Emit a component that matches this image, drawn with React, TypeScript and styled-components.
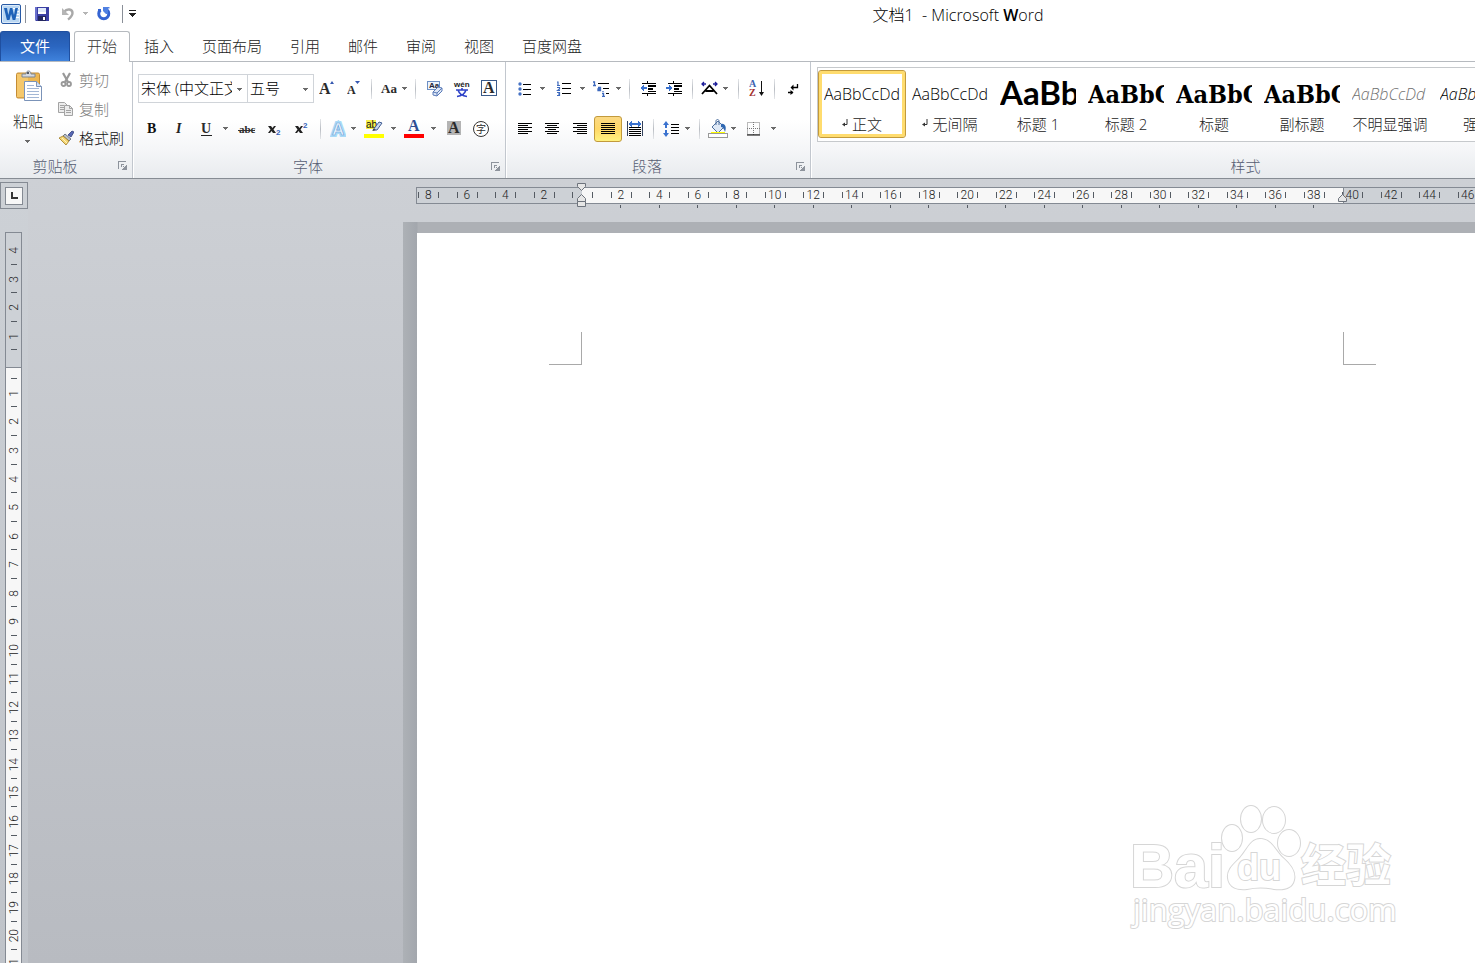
import React from 'react';
import styled, { createGlobalStyle, css } from 'styled-components';

const sans = '"Open Sans", "Noto Sans CJK SC", sans-serif';
const serif = '"Liberation Serif", serif';

const GlobalStyle = createGlobalStyle`
  * { box-sizing: border-box; }
  body { margin: 0; font-family: ${sans}; font-size: 15px; font-weight: 300; color: #222; background: #fff; }
  button, select { font: inherit; color: inherit; margin: 0; padding: 0; border: 0; background: none; }
  svg { display: block; flex: none; }
`;

const Window = styled.div`
  display: flex;
  flex-direction: column;
  height: 100vh;
  overflow: hidden;
`;

/* ---------- title bar ---------- */
const TitleBar = styled.header`
  display: flex;
  flex: none;
  height: 31px;
`;
const QuickAccess = styled.div`
  display: flex;
  align-items: center;
  height: 27px;
  padding-left: 1px;
`;
const QuickButton = styled.button<{ $w: number }>`
  display: flex;
  align-items: center;
  justify-content: center;
  width: ${(p) => p.$w}px;
  height: 24px;
`;
const QuickRule = styled.span`
  width: 1px;
  height: 18px;
  margin: 0 4px;
  background: #8a8f98;
`;
const Title = styled.h1`
  flex: 1;
  margin: 0;
  padding-left: 304px;
  text-align: center;
  font-size: 16px;
  line-height: 31px;
  font-weight: 300;
  color: #000;
`;
const TitleStrong = styled.span`
  font-weight: 600;
`;

/* ---------- tabs ---------- */
const TabBar = styled.nav`
  display: flex;
  flex: none;
  height: 31px;
  border-bottom: 1px solid #b6babf;
`;
const FileTab = styled.button`
  width: 70px;
  margin-right: 4px;
  padding-bottom: 2px;
  color: #fff;
  border: 1px solid #1f4fa0;
  border-bottom: 0;
  border-radius: 3px 3px 0 0;
  background: linear-gradient(#2459ad, #2b66c0 50%, #3f82dc);
  font-weight: 400;
`;
const Tab = styled.button<{ $active?: boolean }>`
  padding: 0 14px 2px;
  height: 31px;
  color: #222;
  ${(p) =>
    p.$active &&
    css`
      padding: 0 12px 4px;
      border: 1px solid #b6babf;
      border-bottom: 0;
      border-radius: 3px 3px 0 0;
      background: #fff;
      color: #333;
    `}
`;

/* ---------- ribbon ---------- */
const Ribbon = styled.div`
  display: flex;
  flex: none;
  height: 117px;
  border-bottom: 1px solid #868c93;
  background: linear-gradient(#fff 0, #fff 50%, #f5f6f8 75%, #e8ebee 100%);
`;
const Group = styled.section<{ $w: number }>`
  display: flex;
  flex-direction: column;
  flex: none;
  width: ${(p) => p.$w}px;
  border-right: 1px solid #c2c7ce;
  box-shadow: 1px 0 0 #fff;
`;
const GroupBody = styled.div`
  display: flex;
  flex-direction: column;
  flex: 1;
  padding: 13px 5px 0;
`;
const GroupFoot = styled.footer`
  display: flex;
  align-items: center;
  height: 24px;
  padding: 0 4px 0 0;
  color: #565d72;
`;
const GroupName = styled.span`
  flex: 1;
  padding: 0 8px 2px 0;
  text-align: center;
`;
const ToolRow = styled.div`
  display: flex;
  align-items: center;
  height: 27px;
  margin-bottom: 13px;
`;
const Tool = styled.button<{ $w?: number; $on?: boolean }>`
  display: flex;
  align-items: center;
  justify-content: center;
  flex: none;
  width: ${(p) => p.$w ?? 27}px;
  height: 26px;
  ${(p) =>
    p.$on &&
    css`
      border: 1px solid #c29a3c;
      border-radius: 3px;
      background: linear-gradient(#fbd984, #ffd868 50%, #fff27f);
    `}
`;
const Divider = styled.span<{ $w: number }>`
  flex: none;
  width: ${(p) => p.$w}px;
  height: 20px;
  background: linear-gradient(#e4e6e9, #b9bdc3, #e4e6e9) center / 1px 100% no-repeat;
`;
const Combo = styled.div<{ $w: number }>`
  position: relative;
  flex: none;
  width: ${(p) => p.$w}px;
  height: 29px;
  margin-right: -1px;
  border: 1px solid #d0d4d9;
  background: #fff;
`;
const ComboSelect = styled.select`
  appearance: none;
  width: 100%;
  height: 26px;
  padding: 0 15px 0 2px;
  color: #000;
`;
const ComboArrow = styled.span`
  position: absolute;
  top: 13px;
  right: 4px;
  pointer-events: none;
`;

const ClipBody = styled.div`
  display: flex;
  flex: 1;
  padding: 3px 0 0 6px;
`;
const PasteButton = styled.button`
  display: flex;
  flex-direction: column;
  align-items: center;
  width: 44px;
  height: 86px;
  padding-top: 5px;
  line-height: 20px;
  gap: 9px;
`;
const ClipList = styled.div`
  display: flex;
  flex-direction: column;
  padding-left: 8px;
`;
const ClipButton = styled.button<{ $off?: boolean }>`
  display: flex;
  align-items: center;
  gap: 5px;
  height: 29px;
  white-space: nowrap;
  color: ${(p) => (p.$off ? '#808080' : '#111')};
`;

const Gallery = styled.div`
  display: flex;
  flex: none;
  height: 75px;
  margin: 5px 0 0 6px;
  padding: 2px 0 0;
  border: 1px solid #c6c9cc;
  border-right: 0;
  background: #fff;
`;
const StyleCard = styled.button<{ $on?: boolean }>`
  display: flex;
  flex-direction: column;
  flex: none;
  width: 88px;
  height: 68px;
  padding: 2px;
  border: 1px solid ${(p) => (p.$on ? '#c29a3c' : 'transparent')};
  border-radius: 3px;
  box-shadow: ${(p) => (p.$on ? 'inset 0 0 0 3px #ffdc6e' : 'none')};
`;
type SampleKind = 'body' | 'h1' | 'serif' | 'subtle' | 'italic';
const Sample = styled.span<{ $kind: SampleKind }>`
  display: block;
  width: 76px;
  height: 40px;
  margin-left: 3px;
  overflow: hidden;
  white-space: nowrap;
  text-align: left;
  color: #000;
  font-size: 16px;
  line-height: 42px;
  font-weight: 300;
  ${(p) => p.$kind === 'h1' && css`font: 700 33px/38px Lato, sans-serif;`}
  ${(p) => p.$kind === 'serif' && css`font: 700 25px/44px "DejaVu Serif Condensed", "DejaVu Serif", serif;`}
  ${(p) => p.$kind === 'subtle' && css`font-style: italic; color: #707070;`}
  ${(p) => p.$kind === 'italic' && css`font-style: italic;`}
`;
const StyleName = styled.span`
  display: flex;
  align-items: center;
  justify-content: center;
  gap: 4px;
  height: 20px;
  white-space: nowrap;
  color: #222;
`;

/* ---------- workspace ---------- */
const Workspace = styled.main`
  display: flex;
  flex: 1;
  min-height: 0;
  background: linear-gradient(#cdd0d5, #b8bbc1);
`;
const Gutter = styled.aside`
  display: flex;
  flex-direction: column;
  flex: none;
  width: 28px;
  padding-top: 3px;
  background: linear-gradient(#cdd1d6, #bfc3c9);
`;
const TabStop = styled.button`
  display: flex;
  align-items: center;
  justify-content: center;
  flex: none;
  width: 28px;
  height: 27px;
  border: 1px solid #848a93;
`;
const TabStopFace = styled.span`
  display: flex;
  align-items: center;
  justify-content: center;
  width: 18px;
  height: 18px;
  border: 1px solid #848a93;
  background: #f7f7f7;
`;
const VRuler = styled.div`
  flex: 1;
  min-height: 0;
  width: 17px;
  margin: 23px 0 0 5px;
  padding-top: 3px;
  overflow: hidden;
  border: 1px solid #848a93;
  border-bottom: 0;
  background: linear-gradient(#cdd1d6 134px, #848a93 134px, #848a93 135px, #f7f7f7 135px);
`;
const VBlock = styled.div`
  display: grid;
  grid-template-rows: repeat(7, 1fr);
  height: 200px;
`;
const VCell = styled.div`
  display: flex;
  align-items: center;
  justify-content: center;
  min-height: 0;
  background: linear-gradient(#555b63, #555b63) center bottom / 6px 1px no-repeat;
`;
const VNumber = styled.span`
  writing-mode: vertical-rl;
  transform: rotate(180deg);
  font-family: Roboto, sans-serif;
  font-size: 12px;
  line-height: 14px;
  color: #222;
`;

const Canvas = styled.div`
  display: flex;
  flex-direction: column;
  flex: 1;
  min-width: 0;
`;
const RulerArea = styled.div`
  position: relative;
  flex: none;
  height: 43px;
  padding: 8px 0 0 388px;
`;
const HRuler = styled.div`
  height: 17px;
  overflow: hidden;
  border: 1px solid #848a93;
  border-right: 0;
  background: linear-gradient(90deg, #cdd1d6 165px, #f7f7f7 165px, #f7f7f7 926px, #848a93 926px, #848a93 927px, #cdd1d6 927px);
`;
const HStrip = styled.div<{ $shift: number }>`
  display: flex;
  margin-left: ${(p) => p.$shift}px;
`;
const HPair = styled.div`
  display: grid;
  grid-template-columns: 1fr 1fr;
  flex: none;
  width: 77px;
`;
const HCell = styled.div`
  display: flex;
  align-items: center;
  justify-content: center;
  height: 15px;
  background:
    linear-gradient(#555b63, #555b63) 9px 4px / 1px 6px no-repeat,
    linear-gradient(#555b63, #555b63) 29px 4px / 1px 6px no-repeat;
  font-family: Roboto, sans-serif;
  font-size: 12px;
  line-height: 15px;
  color: #222;
`;
const StopCell = styled.div<{ $show: boolean }>`
  height: 4px;
  background: ${(p) => (p.$show ? 'linear-gradient(#555b63, #555b63) center bottom / 1px 3px no-repeat' : 'none')};
`;
const IndentMark = styled.span<{ $x: number; $y: number }>`
  position: absolute;
  left: ${(p) => p.$x}px;
  top: ${(p) => p.$y}px;
`;
const PageArea = styled.div`
  position: relative;
  display: flex;
  flex: 1;
  min-height: 0;
  margin-left: 375px;
  padding: 11px 0 0 14px;
  background: linear-gradient(90deg, #adb1b6, #a3a7ad 14px, #adb0b5 15px);
`;
const Page = styled.article`
  display: flex;
  flex: 1;
  padding: 99px 0 0 132px;
  background: #fff;
`;
const CropMark = styled.span<{ $side: 'left' | 'right' }>`
  flex: none;
  width: 33px;
  height: 33px;
  border: 0 solid #a9a9a9;
  border-bottom-width: 1px;
  ${(p) => (p.$side === 'left' ? 'border-right-width: 1px; margin-right: 761px;' : 'border-left-width: 1px;')}
`;
const Watermark = styled.div`
  position: absolute;
  right: 73px;
  bottom: 27px;
`;

/* ---------- icons ---------- */
const Arrow = ({ color = '#6a6a6a' }: { color?: string }) => (
  <svg width="6" height="4" viewBox="0 0 6 4"><path d="M0 0h5v1h-1v1h-1v1h-1v-1h-1v-1h-1z" fill={color} shapeRendering="crispEdges" /></svg>
);
const Drop = () => <Tool $w={8} aria-label="更多"><Arrow /></Tool>;

const WordLogo = () => (
  <svg width="20" height="20" viewBox="0 0 20 20">
    <rect x="0.500" y="0.500" width="19" height="19" rx="1.500" fill="#dcebfa" stroke="#285aa5" />
    <rect x="2" y="2" width="16" height="16" fill="#b9d6f2" />
    <path d="M12 4h6v1h-6zM14 7h4v1h-4zM15 10h3v1h-3zM14 13h4v1h-4z" fill="#fff" />
    <path d="M3 4h3l1.300 7 1.700-7h2.300l1.700 7 1.300-7h2.700l-2.700 12h-2.600l-1.600-6-1.600 6h-2.600z" fill="#1f62b8" />
  </svg>
);
const Save = () => (
  <svg width="14" height="14" viewBox="0 0 14 14">
    <path d="M0 0h14v14h-13l-1-1z" fill="#3b3fa4" /><path d="M0 0h2v13h-2z" fill="#6a70cc" />
    <path d="M3 1h8v6h-8z" fill="#dfe9fa" /><path d="M3 5h8v2h-8z" fill="#fff" />
    <path d="M3 9h8v5h-8z" fill="#23265f" /><path d="M8 10h2v3h-2z" fill="#fff" />
  </svg>
);
const Undo = () => (
  <svg width="14" height="14" viewBox="0 0 14 14" fill="none">
    <path d="M3 5c3-4 8.500-3 8.500 1 0 3-2 4.500-4.500 6.500" stroke="#a9a9a9" strokeWidth="2.400" />
    <path d="M1 1v7h7z" fill="#b5b5b5" />
  </svg>
);
const Redo = () => (
  <svg width="14" height="14" viewBox="0 0 14 14" fill="none">
    <path d="M3.500 3a5 5 0 1 0 6.500 0" stroke="#3564d2" strokeWidth="3" />
    <path d="M6 0h6.500v1.500h-1.500v5.500h-2l-3-3z" fill="#4f80e2" /><path d="M1 2h3v3h-3z" fill="#3564d2" />
  </svg>
);
const Customize = () => (
  <svg width="7" height="7" viewBox="0 0 7 7" shapeRendering="crispEdges"><path d="M0 0h7v1h-7zM0 3h7v1h-1v1h-1v1h-1v1h-1v-1h-1v-1h-1v-1h-1z" fill="#222" /></svg>
);
const Paste = () => (
  <svg width="28" height="32" viewBox="0 0 28 32">
    <rect x="2.500" y="3" width="23" height="25" rx="1.500" fill="#edb752" stroke="#c48c34" />
    <path d="M3 4h11v23h-11z" fill="#f5c86c" />
    <path d="M8 7v-3h4c0-4 5-4 5 0h4v3z" fill="#d6dae0" stroke="#7e8792" /><rect x="13" y="2" width="2" height="2" fill="#545b66" />
    <path d="M10.500 11.500h12l5 5v14h-17z" fill="#fff" stroke="#7b93b8" />
    <path d="M22.500 11.500v5h5" fill="#d4e1f3" stroke="#7b93b8" />
    <path d="M13 15.500h7M13 18.500h12M13 21.500h12M13 24.500h12M13 27.500h12" stroke="#a3b7d5" />
  </svg>
);
const Cut = () => (
  <svg width="16" height="16" viewBox="0 0 16 16" fill="none" stroke="#999">
    <path d="M5 1l5 9M12 1l-5 9" strokeWidth="2.200" /><circle cx="5.500" cy="12" r="2" strokeWidth="1.800" /><circle cx="11" cy="12" r="2" strokeWidth="1.800" />
  </svg>
);
const Copy = () => (
  <svg width="16" height="16" viewBox="0 0 16 16" fill="#ececec" stroke="#a3a3a3">
    <path d="M0.500 1.500h6l3 3v7h-9z" /><path d="M2 4.500h4M2 6.500h4M2 8.500h4" />
    <path d="M6.500 4.500h5l3 3v7h-8z" /><path d="M11.500 4.500v3h3M8 9.500h5M8 11.500h5" fill="none" />
  </svg>
);
const Brush = () => (
  <svg width="16" height="16" viewBox="0 0 16 16">
    <path d="M10 5l4-4 2 1-3 5z" fill="#5868b4" stroke="#34417c" strokeWidth="0.800" />
    <path d="M7 4l6 5-2 2-6-5z" fill="#b7bdc7" stroke="#596270" strokeWidth="0.800" />
    <path d="M5 6l6 5-3 4-7-7z" fill="#f4d675" stroke="#a07b25" strokeWidth="0.800" />
    <path d="M4 8l5 5" stroke="#fff3bd" />
  </svg>
);
const Launcher = () => (
  <svg width="10" height="10" viewBox="0 0 10 10" shapeRendering="crispEdges">
    <path d="M0 0h8v1h-7v7h-1z" fill="#8d939c" /><path d="M3 3h3v1h-3zM3 3h1v3h-1zM5 5h1v1h-1zM6 6h1v1h-1zM8 4h1v5h-5v-1h1v-1h2v-2h1z" fill="#8d939c" />
  </svg>
);
type LetterProps = { x?: number; y?: number; size: number; fill?: string; children: React.ReactNode; family?: string; weight?: number; style?: 'italic' };
const Letter = ({ x = 0, y = 0, size, fill = '#2b2b2b', children, family = serif, weight = 700, style }: LetterProps) => (
  <text x={x} y={y} fontSize={size} fill={fill} fontFamily={family} fontWeight={weight} fontStyle={style}>{children}</text>
);
const Grow = () => (
  <svg width="15" height="18" viewBox="0 0 15 18"><Letter y={14} size={16}>A</Letter><path d="M11 4h4l-2-3z" fill="#3558b0" /></svg>
);
const Shrink = () => (
  <svg width="13" height="18" viewBox="0 0 13 18"><Letter y={14} size={12}>A</Letter><path d="M8 1h5l-2.500 3z" fill="#3558b0" /></svg>
);
const CaseIcon = () => (
  <svg width="17" height="18" viewBox="0 0 17 18"><Letter x={1} y={13} size={13}>Aa</Letter></svg>
);
const ClearFormat = () => (
  <svg width="18" height="18" viewBox="0 0 18 18">
    <rect x="1.500" y="1.500" width="12" height="8" fill="#eef4fb" stroke="#6d8fc4" />
    <Letter x={3} y={8} size={8} family="Liberation Sans" fill="#223">Aa</Letter>
    <path d="M7 12l5-5 4 1v3l-5 5-4-1z" fill="#dfe8f6" stroke="#5a7bb8" /><path d="M7 12l4 1v3M11 13l5-5" fill="none" stroke="#5a7bb8" />
  </svg>
);
const Phonetic = () => (
  <svg width="18" height="18" viewBox="0 0 18 18">
    <Letter x={1} y={7} size={8} family="Liberation Sans" fill="#222">wén</Letter>
    <path d="M3 10h12M9 8v2M5 10c1 3 4 6 9 6.500M13 10c-1 3-4 6-9 6.500" fill="none" stroke="#2f43c8" strokeWidth="1.600" />
  </svg>
);
const CharBorder = () => (
  <svg width="16" height="17" viewBox="0 0 16 17"><rect x="0.500" y="0.500" width="15" height="15" fill="#fff" stroke="#3a5a8a" /><Letter x={2} y={13} size={16}>A</Letter></svg>
);
const TextEffect = () => (
  <svg width="16" height="18" viewBox="0 0 16 18">
    <text x="2" y="15" fontSize="17" fontFamily="Liberation Sans" fontWeight="700" fill="#fff" stroke="#a9daf7" strokeWidth="4" paintOrder="stroke">A</text>
    <text x="2" y="15" fontSize="17" fontFamily="Liberation Sans" fontWeight="700" fill="#eaf4fc" stroke="#6a9fd8" strokeWidth="0.700">A</text>
  </svg>
);
const Highlight = () => (
  <svg width="20" height="20" viewBox="0 0 20 20">
    <rect x="2" y="1" width="10" height="9" fill="#f7f04a" /><Letter x={2} y={9} size={10} family="Liberation Sans" weight={400} fill="#111">ab</Letter>
    <path d="M9 11l6-8 3 1-5 7z" fill="#c8d6ee" stroke="#3f5c93" /><path d="M8 12l2-2 2 1z" fill="#333" />
    <rect y="15" width="20" height="4" fill="#ff0" />
  </svg>
);
const FontColor = () => (
  <svg width="20" height="20" viewBox="0 0 20 20"><Letter x={4} y={12} size={16} fill="#2f4f93">A</Letter><rect y="15" width="20" height="4" fill="#f00" /></svg>
);
const Shade = () => (
  <svg width="14" height="15" viewBox="0 0 14 15"><rect width="14" height="14" fill="#b4b4b4" /><Letter x={1} y={12} size={16}>A</Letter></svg>
);
const Enclose = () => (
  <svg width="18" height="18" viewBox="0 0 18 18"><circle cx="9" cy="9" r="7.500" fill="#fff" stroke="#333" /><Letter x={4} y={13} size={10} family="Noto Sans CJK SC" weight={400}>字</Letter></svg>
);
const BoldIcon = () => <svg width="12" height="14" viewBox="0 0 12 14"><Letter x={1} y={11} size={14} fill="#111">B</Letter></svg>;
const ItalicIcon = () => <svg width="12" height="14" viewBox="0 0 12 14"><Letter x={3} y={11} size={14} style="italic" fill="#222">I</Letter></svg>;
const UnderlineIcon = () => (
  <svg width="12" height="14" viewBox="0 0 12 14"><Letter x={1} y={11} size={14}>U</Letter><path d="M1 13.500h11" stroke="#222" /></svg>
);
const StrikeIcon = () => (
  <svg width="18" height="14" viewBox="0 0 18 14"><Letter x={1} y={11} size={11}>abc</Letter><path d="M0 8.500h17" stroke="#333" /></svg>
);
const Script = ({ up }: { up?: boolean }) => (
  <svg width="14" height="16" viewBox="0 0 14 16"><path d="M1 5h3l1.500 2 1.500-2h2l-2.500 3.500 2.500 3.500h-3l-1.500-2-1.500 2h-2l2.500-3.500z" fill="#222" /><Letter x={9} y={up ? 7 : 14} size={8} family="Liberation Sans" fill="#3561b8">2</Letter></svg>
);
const Lines = ({ rows }: { rows: [number, number][] }) => (
  <svg width="14" height="12" viewBox="0 0 14 12" shapeRendering="crispEdges">
    {rows.map(([x, w], i) => <rect key={i} x={x} y={i * 2} width={w} height="1" fill="#000" />)}
  </svg>
);
const alignLeft: [number, number][] = [[0, 14], [0, 10], [0, 14], [0, 10], [0, 14], [0, 10]];
const alignCenter: [number, number][] = [[0, 14], [2, 10], [0, 14], [3, 8], [0, 14], [2, 10]];
const alignRight: [number, number][] = [[0, 14], [4, 10], [0, 14], [4, 10], [0, 14], [4, 10]];
const alignFull: [number, number][] = [[0, 14], [0, 14], [0, 14], [0, 14], [0, 14], [0, 14]];
const Distribute = () => (
  <svg width="16" height="16" viewBox="0 0 16 16" shapeRendering="crispEdges">
    <path d="M0 0h1v15h-1zM15 0h1v15h-1z" fill="#33415c" /><path d="M1 3l4-3v2h6v-2l4 3-4 3v-2h-6v2z" fill="#3a72cf" />
    <path d="M2 6h12v1h-12zM2 8h12v1h-12zM2 10h12v1h-12zM2 12h12v1h-12zM2 14h12v1h-12z" fill="#000" />
  </svg>
);
const Bullets = () => (
  <svg width="14" height="14" viewBox="0 0 14 14"><g fill="#4672c4"><circle cx="2" cy="2" r="1.700" /><circle cx="2" cy="7" r="1.700" /><circle cx="2" cy="12" r="1.700" /></g><path d="M5 2.500h8M5 7.500h8M5 12.500h8" stroke="#000" /></svg>
);
const Numbering = () => (
  <svg width="15" height="15" viewBox="0 0 15 15">
    <path d="M1 1h1v3M1 4.500h3M1 6.500h2.500v1.500l-2 1.500h2.500M1 11.500h2.500v3h-2.500M2 13h1" fill="none" stroke="#3d69bd" strokeWidth="1.200" />
    <path d="M6 2.500h9M6 7.500h9M6 12.500h9" stroke="#000" />
  </svg>
);
const Multilevel = () => (
  <svg width="17" height="16" viewBox="0 0 17 16">
    <path d="M0 1h1.500v3M0 4.500h3M5 6.500h2.500v3h-2.500v-1.500h2.500M10 10v1M9 12.500h1.500v2.500M9 15.500h3" fill="none" stroke="#3d69bd" strokeWidth="1.300" />
    <path d="M5 2.500h11M10 7.500h6M13 12.500h3" stroke="#000" />
  </svg>
);
const Indent = ({ out }: { out?: boolean }) => (
  <svg width="17" height="15" viewBox="0 0 17 15" shapeRendering="crispEdges">
    <path d="M2 2h14v1h-14zM8 4h8v2h-8zM8 7h5v2h-5zM8 10h8v1h-8zM2 12h14v1h-14zM7 0h1v2h-1zM7 13h1v2h-1z" fill="#000" />
    <path d={out ? 'M0 7l4-3v2h3v2h-3v2z' : 'M7 7l-4-3v2h-3v2h3v2z'} fill="#3a72cf" />
  </svg>
);
const AsianLayout = () => (
  <svg width="17" height="15" viewBox="0 0 17 15"><path d="M1 3h4M12 3h4M3 1l-2 2 2 2M14 1l2 2-2 2" fill="none" stroke="#1c1c99" strokeWidth="1.300" /><path d="M1 13l7.500-8.500 7.500 8.500M4.500 10h8" fill="none" stroke="#000" strokeWidth="1.800" /></svg>
);
const Sort = () => (
  <svg width="16" height="17" viewBox="0 0 16 17"><Letter y={7} size={10} fill="#3d62b0">A</Letter><Letter y={16} size={10} fill="#a33030">Z</Letter><path d="M12.500 1v12" stroke="#111" /><path d="M10 12h5l-2.500 4z" fill="#111" /></svg>
);
const Marks = () => (
  <svg width="12" height="14" viewBox="0 0 12 14" fill="none" stroke="#000"><path d="M10.500 2v3.500h-5M1 10.500h5" strokeWidth="1.300" /><path d="M3.500 5.500l3-3v6zM6.500 10.500l-3-2.500v5z" fill="#000" stroke="none" /></svg>
);
const Spacing = () => (
  <svg width="16" height="16" viewBox="0 0 16 16"><path d="M3 0l3 4h-2v3h-2v-3h-2zM3 16l3-4h-2v-3h-2v3h-2z" fill="#3a72cf" /><path d="M8 3.500h8M8 6.500h8M8 9.500h8M8 12.500h8" stroke="#000" /></svg>
);
const Bucket = () => (
  <svg width="20" height="20" viewBox="0 0 20 20">
    <path d="M4 8l6-6 6 6-6 6z" fill="#dfe9f6" stroke="#4f709f" /><path d="M8 6v-4c0-2 3-2 3 0v4" fill="none" stroke="#4f709f" />
    <path d="M13 5c4-1 6 3 4 8-1-3-2-5-4-5z" fill="#2f67b1" /><path d="M3 13h14v1h-14z" fill="#ff0" /><rect x="0.500" y="14.500" width="19" height="4" fill="#fff" stroke="#999" />
  </svg>
);
const Borders = () => (
  <svg width="14" height="14" viewBox="0 0 14 14"><path d="M0.500 0.500h12v12h-12zM6.500 0v13M0 6.500h13" fill="none" stroke="#777" strokeDasharray="1 1" /><path d="M0 13h13" stroke="#000" /></svg>
);
const ReturnMark = () => (
  <svg width="6" height="8" viewBox="0 0 6 8"><path d="M5 0v5.500h-2.500" fill="none" stroke="#333" /><path d="M0 5.500l3-2v4z" fill="#333" /></svg>
);
const BaiduMark = () => (
  <svg width="276" height="136" viewBox="1125 800 276 136" fill="#fff" stroke="#d6d6d6" strokeWidth="2" paintOrder="stroke">
    <text x="1129" y="887" fontFamily="Liberation Sans" fontWeight="700" fontSize="61">Bai</text>
    <ellipse cx="1231" cy="838" rx="10" ry="13" /><ellipse cx="1250" cy="819" rx="10" ry="13" />
    <ellipse cx="1273" cy="820" rx="11" ry="13" /><ellipse cx="1288" cy="843" rx="11" ry="13" />
    <path d="M1259 839c12 0 15 12 23 19 8 7 13 14 11 22-2 9-11 10-20 9-9-2-18-2-27 0-9 1-18-1-19-11-1-8 5-13 11-19 8-8 11-20 21-20z" />
    <text x="1236" y="880" fontFamily="Liberation Sans" fontSize="36" fontWeight="700">du</text>
    <text x="1300" y="882" fontFamily="Noto Sans CJK SC" fontWeight="700" fontSize="45">经验</text>
    <text x="1132" y="921" fontFamily="Open Sans, sans-serif" fontWeight="400" fontSize="31">jingyan.baidu.com</text>
  </svg>
);

/* ---------- data ---------- */
const tabs = ['插入', '页面布局', '引用', '邮件', '审阅', '视图', '百度网盘'];
const styleCards: { name: string; sample: string; kind: SampleKind; mark?: boolean }[] = [
  { name: '正文', sample: 'AaBbCcDd', kind: 'body', mark: true },
  { name: '无间隔', sample: 'AaBbCcDd', kind: 'body', mark: true },
  { name: '标题 1', sample: 'AaBb', kind: 'h1' },
  { name: '标题 2', sample: 'AaBbC', kind: 'serif' },
  { name: '标题', sample: 'AaBbC', kind: 'serif' },
  { name: '副标题', sample: 'AaBbC', kind: 'serif' },
  { name: '不明显强调', sample: 'AaBbCcDd', kind: 'subtle' },
  { name: '强调', sample: 'AaBbCcDd', kind: 'italic' },
];
const hNumbers = Array.from({ length: 60 }, (_, i) => (i - 4) * 2);
const hPairs = Array.from({ length: 30 }, (_, i) => [hNumbers[i * 2], hNumbers[i * 2 + 1]]);
const vBlocks = Array.from({ length: 6 }, (_, b) => Array.from({ length: 7 }, (_, i) => b * 7 + i - 4));

const Foot = ({ name }: { name: string }) => (
  <GroupFoot><GroupName>{name}</GroupName><button aria-label={`${name}选项`}><Launcher /></button></GroupFoot>
);

export default function App() {
  return (
    <Window>
      <GlobalStyle />
      <TitleBar>
        <QuickAccess>
          <WordLogo />
          <QuickRule />
          <QuickButton $w={24} aria-label="保存"><Save /></QuickButton>
          <QuickButton $w={28} aria-label="撤消"><Undo /></QuickButton>
          <QuickButton $w={8} aria-label="撤消列表"><Arrow color="#b5b5b5" /></QuickButton>
          <QuickButton $w={28} aria-label="重复"><Redo /></QuickButton>
          <QuickRule />
          <QuickButton $w={10} aria-label="自定义快速访问工具栏"><Customize /></QuickButton>
        </QuickAccess>
        <Title>文档1&nbsp; - Microsoft <TitleStrong>W</TitleStrong>ord</Title>
      </TitleBar>
      <TabBar>
        <FileTab>文件</FileTab>
        <Tab $active>开始</Tab>
        {tabs.map((t) => <Tab key={t}>{t}</Tab>)}
      </TabBar>
      <Ribbon>
        <Group $w={133}>
          <ClipBody>
            <PasteButton><Paste />粘贴<Arrow /></PasteButton>
            <ClipList>
              <ClipButton $off><Cut />剪切</ClipButton>
              <ClipButton $off><Copy />复制</ClipButton>
              <ClipButton><Brush />格式刷</ClipButton>
            </ClipList>
          </ClipBody>
          <Foot name="剪贴板" />
        </Group>
        <Group $w={373}>
          <GroupBody>
            <ToolRow>
              <Combo $w={110}>
                <ComboSelect aria-label="字体"><option>宋体 (中文正文)</option></ComboSelect>
                <ComboArrow><Arrow /></ComboArrow>
              </Combo>
              <Combo $w={67}>
                <ComboSelect aria-label="字号"><option>五号</option></ComboSelect>
                <ComboArrow><Arrow /></ComboArrow>
              </Combo>
              <Tool aria-label="增大字体"><Grow /></Tool>
              <Tool aria-label="缩小字体"><Shrink /></Tool>
              <Divider $w={8} />
              <Tool $w={26} aria-label="更改大小写"><CaseIcon /></Tool><Drop />
              <Divider $w={12} />
              <Tool aria-label="清除格式"><ClearFormat /></Tool>
              <Tool aria-label="拼音指南"><Phonetic /></Tool>
              <Tool aria-label="字符边框"><CharBorder /></Tool>
            </ToolRow>
            <ToolRow>
              <Tool aria-label="加粗"><BoldIcon /></Tool>
              <Tool aria-label="倾斜"><ItalicIcon /></Tool>
              <Tool aria-label="下划线"><UnderlineIcon /></Tool>
              <Tool $w={14} aria-label="下划线样式"><Arrow /></Tool>
              <Tool aria-label="删除线"><StrikeIcon /></Tool>
              <Tool aria-label="下标"><Script /></Tool>
              <Tool aria-label="上标"><Script up /></Tool>
              <Divider $w={12} />
              <Tool $w={24} aria-label="文本效果"><TextEffect /></Tool><Drop />
              <Tool $w={32} aria-label="突出显示"><Highlight /></Tool><Drop />
              <Tool $w={32} aria-label="字体颜色"><FontColor /></Tool><Drop />
              <Tool $w={32} aria-label="字符底纹"><Shade /></Tool>
              <Tool $w={22} aria-label="带圈字符"><Enclose /></Tool>
            </ToolRow>
          </GroupBody>
          <Foot name="字体" />
        </Group>
        <Group $w={305}>
          <GroupBody>
            <ToolRow>
              <Tool $w={28} aria-label="项目符号"><Bullets /></Tool><Drop />
              <Tool $w={32} aria-label="编号"><Numbering /></Tool><Drop />
              <Tool $w={28} aria-label="多级列表"><Multilevel /></Tool><Drop />
              <Divider $w={12} />
              <Tool $w={26} aria-label="减少缩进量"><Indent out /></Tool>
              <Tool aria-label="增加缩进量"><Indent /></Tool>
              <Divider $w={8} />
              <Tool $w={26} aria-label="中文版式"><AsianLayout /></Tool><Drop />
              <Divider $w={16} />
              <Tool $w={22} aria-label="排序"><Sort /></Tool>
              <Divider $w={12} />
              <Tool $w={26} aria-label="显示编辑标记"><Marks /></Tool>
            </ToolRow>
            <ToolRow>
              <Tool aria-label="左对齐"><Lines rows={alignLeft} /></Tool>
              <Tool $w={28} aria-label="居中"><Lines rows={alignCenter} /></Tool>
              <Tool $w={28} aria-label="右对齐"><Lines rows={alignRight} /></Tool>
              <Tool $w={28} $on aria-label="两端对齐"><Lines rows={alignFull} /></Tool>
              <Tool $w={26} aria-label="分散对齐"><Distribute /></Tool>
              <Divider $w={10} />
              <Tool $w={26} aria-label="行距"><Spacing /></Tool><Drop />
              <Divider $w={14} />
              <Tool $w={24} aria-label="底纹"><Bucket /></Tool><Drop />
              <Tool $w={32} aria-label="边框"><Borders /></Tool><Drop />
            </ToolRow>
          </GroupBody>
          <Foot name="段落" />
        </Group>
        <Group $w={892}>
          <Gallery>
            {styleCards.map((c, i) => (
              <StyleCard key={c.name} $on={i === 0}>
                <Sample $kind={c.kind}>{c.sample}</Sample>
                <StyleName>{c.mark && <ReturnMark />}{c.name}</StyleName>
              </StyleCard>
            ))}
          </Gallery>
          <GroupBody />
          <Foot name="样式" />
        </Group>
      </Ribbon>
      <Workspace>
        <Gutter>
          <TabStop aria-label="制表符">
            <TabStopFace><svg width="7" height="7" viewBox="0 0 7 7"><path d="M0 0h2v5h5v2h-7z" fill="#333" /></svg></TabStopFace>
          </TabStop>
          <VRuler>
            {vBlocks.map((block, b) => (
              <VBlock key={b}>
                {block.map((n) => <VCell key={n}>{n !== 0 && <VNumber>{Math.abs(n)}</VNumber>}</VCell>)}
              </VBlock>
            ))}
          </VRuler>
        </Gutter>
        <Canvas>
          <RulerArea>
            <HRuler>
              <HStrip $shift={-8}>
                {hPairs.map((pair) => (
                  <HPair key={pair[0]}>{pair.map((n) => <HCell key={n}>{n !== 0 && Math.abs(n)}</HCell>)}</HPair>
                ))}
              </HStrip>
            </HRuler>
            <HStrip $shift={-7}>
              {hPairs.slice(0, 12).map((pair) => (
                <HPair key={pair[0]}>{pair.map((n) => <StopCell key={n} $show={n > 0 && n < 40} />)}</HPair>
              ))}
            </HStrip>
            <IndentMark $x={549} $y={4}>
              <svg width="10" height="25" viewBox="0 0 10 25" fill="#e6e6e6" stroke="#6d737c">
                <path d="M0.500 0.500h8v3l-4 4-4-4z" /><path d="M4.500 11.500l4 4v3h-8v-3z" /><path d="M0.500 18.500h8v5h-8z" />
              </svg>
            </IndentMark>
            <IndentMark $x={1310} $y={15}>
              <svg width="10" height="9" viewBox="0 0 10 9"><path d="M4.500 0.500l4 4v3h-8v-3z" fill="#e6e6e6" stroke="#6d737c" /></svg>
            </IndentMark>
          </RulerArea>
          <PageArea>
            <Page>
              <CropMark $side="left" />
              <CropMark $side="right" />
            </Page>
            <Watermark><BaiduMark /></Watermark>
          </PageArea>
        </Canvas>
      </Workspace>
    </Window>
  );
}
